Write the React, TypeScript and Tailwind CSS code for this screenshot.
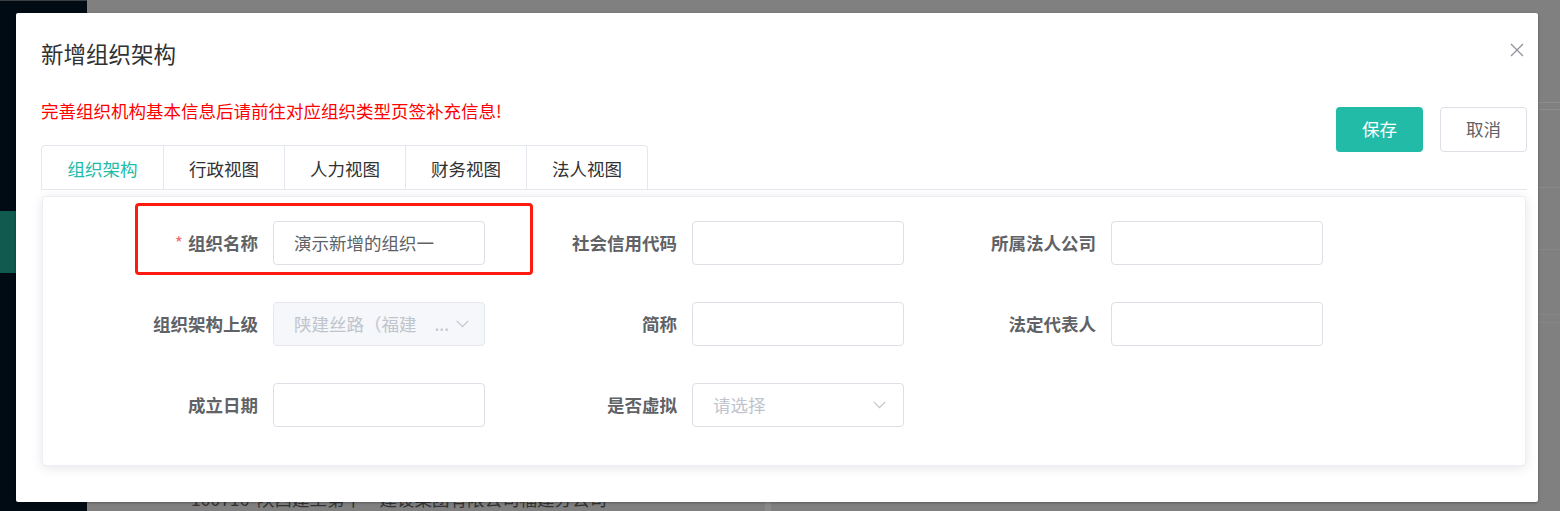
import type { ReactNode } from 'react';

const TEAL = '#22bba8';

function Chevron() {
  return (
    <svg width="13" height="8" viewBox="0 0 13 8" fill="none" className="shrink-0">
      <path d="M0.8 0.8 L6.5 6.6 L12.2 0.8" stroke="#c0c4cc" strokeWidth="1.2" />
    </svg>
  );
}

function Field({ label, required, children }: { label: string; required?: boolean; children: ReactNode }) {
  return (
    <div className="flex h-[44px] items-center">
      <label className="w-[191px] shrink-0 pr-[15px] text-right text-[17.5px] font-bold text-[#606266]">
        {required ? <span className="mr-[5px] font-normal text-[#f56c6c]">*</span> : null}
        {label}
      </label>
      {children}
    </div>
  );
}

function TextBox({ value }: { value?: string }) {
  return (
    <div className="flex h-[44px] w-[212px] items-center rounded-[4px] border border-[#dcdfe6] bg-white px-[20px] text-[17.5px] text-[#606266]">
      {value}
    </div>
  );
}

function SelectBox({ children, disabled }: { children: ReactNode; disabled?: boolean }) {
  return (
    <div
      className={
        disabled
          ? 'flex h-[44px] w-[212px] items-center rounded-[4px] border border-[#e4e7ed] bg-[#f5f7fa] pl-[20px] pr-[15px] text-[17.5px] text-[#c0c4cc]'
          : 'flex h-[44px] w-[212px] items-center rounded-[4px] border border-[#dcdfe6] bg-white pl-[20px] pr-[17px] text-[17.5px] text-[#c0c4cc]'
      }
    >
      <span className="flex-1 whitespace-nowrap">{children}</span>
      <Chevron />
    </div>
  );
}

const tabs = ['组织架构', '行政视图', '人力视图', '财务视图', '法人视图'];

export default function App() {
  return (
    <div className="relative h-[511px] w-[1560px] overflow-hidden bg-[#808080] font-['Microsoft_YaHei','Noto_Sans_CJK_SC',sans-serif]">
      {/* dimmed page behind the dialog */}
      <div className="flex h-full">
        <aside className="w-[87px] shrink-0 border-t border-[#3a3f44] bg-[#010b14]">
          <div className="mt-[210px] h-[62px] bg-[#105a50]" />
        </aside>
        <main className="flex flex-1 flex-col">
          <div className="h-[103px] border-b border-[#8c8c8c]" />
          <div className="h-[7px] border-b border-[#8c8c8c]" />
          <div className="h-[78px] border-b border-[#8a8a8a]" />
          <div className="h-[62px] border-b border-[#868686]" />
          <div className="h-[65px] border-b border-[#868686]" />
          <div className="h-[8px] border-b border-[#868686]" />
          <div className="flex-1" />
          <div className="flex h-[24px] items-center">
            <span className="w-[678px] whitespace-nowrap pl-[104px] text-[17.5px] text-[#333]">
              100716&nbsp;&nbsp;陕西建工第十一建设集团有限公司福建分公司
            </span>
            <div className="h-full w-[6px] bg-[#8a8a8a]" />
          </div>
        </main>
      </div>

      {/* dialog */}
      <div className="absolute left-[16px] top-[13px] h-[489px] w-[1522px] rounded-[2px] bg-white shadow-[0_1px_3px_rgba(0,0,0,0.3)]">
        <header className="pb-[31px] pl-[25px] pt-[25px]">
          <h2 className="text-[22.5px] leading-[30px] text-[#303133]">新增组织架构</h2>
        </header>
        <button className="absolute right-[14px] top-[30px] h-[14px] w-[14px]">
          <svg width="14" height="14" viewBox="0 0 14 14" fill="none">
            <path d="M1 1 L13 13 M13 1 L1 13" stroke="#909399" strokeWidth="1.3" />
          </svg>
        </button>

        <div className="pl-[25px] pr-[11px]">
          <div className="flex items-start justify-between">
            <p className="text-[17.5px] leading-[24px] text-[#ff0000]">完善组织机构基本信息后请前往对应组织类型页签补充信息!</p>
            <div className="mt-[8px] flex gap-[17px]">
              <button className="h-[45px] w-[87px] rounded-[4px] text-[17.5px] text-white" style={{ backgroundColor: TEAL }}>
                保存
              </button>
              <button className="h-[45px] w-[87px] rounded-[4px] border border-[#dcdfe6] bg-white text-[17.5px] text-[#606266]">
                取消
              </button>
            </div>
          </div>

          <div className="-mt-[7px] flex h-[45px] border-b border-[#e4e7ed]">
            <div className="flex rounded-t-[4px] border border-b-0 border-[#e4e7ed]">
              {tabs.map((t, i) => (
                <div
                  key={t}
                  className={
                    i === 0
                      ? 'mb-[-1px] flex h-[45px] w-[121px] items-center justify-center border-b border-white pt-[3px] text-[17.5px] text-[#22bba8]'
                      : 'flex h-[44px] w-[121px] items-center justify-center border-l border-[#e4e7ed] pt-[3px] text-[17.5px] text-[#303133]'
                  }
                >
                  {t}
                </div>
              ))}
            </div>
          </div>

          <section className="mx-[1px] mt-[6px] h-[270px] rounded-[4px] border border-[#ebeef5] bg-white pl-[39px] pt-[24px] shadow-[0_2px_12px_0_rgba(0,0,0,0.1)]">
            <div className="grid grid-cols-[419px_419px_419px] gap-y-[37px]">
              <Field label="组织名称" required>
                <TextBox value="演示新增的组织一" />
              </Field>
              <Field label="社会信用代码">
                <TextBox />
              </Field>
              <Field label="所属法人公司">
                <TextBox />
              </Field>

              <Field label="组织架构上级">
                <SelectBox disabled>
                  陕建丝路（福建<span className="ml-[18px]">...</span>
                </SelectBox>
              </Field>
              <Field label="简称">
                <TextBox />
              </Field>
              <Field label="法定代表人">
                <TextBox />
              </Field>

              <Field label="成立日期">
                <TextBox />
              </Field>
              <Field label="是否虚拟">
                <SelectBox>请选择</SelectBox>
              </Field>
            </div>
          </section>
        </div>

        {/* highlight annotation */}
        <div className="pointer-events-none absolute left-[119px] top-[190px] h-[72px] w-[398px] rounded-[4px] border-[3px] border-[#ff1a0f]" />
      </div>
    </div>
  );
}
